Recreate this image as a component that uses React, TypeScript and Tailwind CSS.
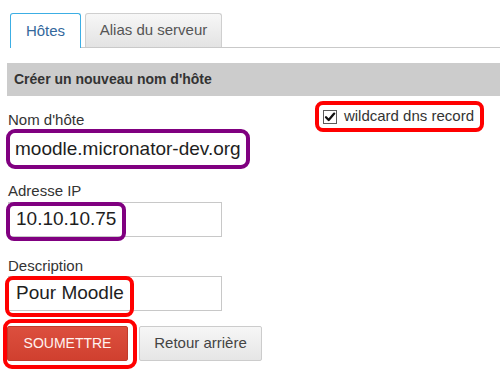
import type { ReactNode } from 'react'

const Label = ({ children, className = '' }: { children: ReactNode; className?: string }) => (
  <div className={`pl-[2px] text-[15px] leading-[16px] text-[#333] ${className}`}>{children}</div>
)

const Field = ({ value }: { value: string }) => (
  <div className="ml-[2px] mt-[3px] flex h-[35px] w-[214px] items-center border border-[#c8c8c8] bg-white pl-[7px] text-[19px] text-[#1e1e1e]">
    {value}
  </div>
)

const CheckIcon = () => (
  <span className="flex h-[14px] w-[14px] items-center justify-center border border-[#5a5a5a] bg-white">
    <svg width="12" height="12" viewBox="0 0 12 12">
      <path d="M2 6.3 L4.7 9 L10.2 2.6" fill="none" stroke="#111" strokeWidth="2.3" strokeLinecap="round" strokeLinejoin="round" />
    </svg>
  </span>
)

export default function App() {
  return (
    <div className="relative h-[376px] w-[500px] overflow-hidden bg-white font-['Liberation_Sans',Arial,sans-serif] text-[#333]">
      {/* tabs */}
      <div className="ml-[10px] flex items-end gap-[4px] border-b border-[#c9c9c9] pt-[13px]">
        <div className="-mb-px flex h-[35px] w-[71px] items-center justify-center rounded-t-[3px] border border-b-0 border-[#3caee4] bg-white text-[15px] text-[#33689c]">
          Hôtes
        </div>
        <div className="flex h-[34px] w-[137px] items-center justify-center rounded-t-[3px] border border-b-0 border-[#cfcfcf] bg-linear-to-b from-[#f7f7f7] to-[#e3e3e3] text-[15px] text-[#555]">
          Alias du serveur
        </div>
      </div>

      <div className="ml-[7px] mt-[15px] flex h-[33px] items-center bg-[#cccccc] pl-[7px] text-[14px] font-bold text-[#333]">
        Créer un nouveau nom d'hôte
      </div>

      <div className="pl-[6px]">
        <div className="flex items-start justify-between pr-[16px]">
          <div className="pt-[16px]">
            <Label>Nom d'hôte</Label>
            <div className="mt-[1px] flex h-[40px] w-[244px] items-center rounded-[9px] border-4 border-[#800080] bg-white pl-[5px] text-[19px] text-[#1e1e1e]">
              moodle.micronator-dev.org
            </div>
          </div>
          <label className="mt-[5px] flex h-[31px] items-center gap-[7px] rounded-[8px] border-4 border-[#ff0000] pl-[4px] pr-[6px] text-[15px] text-[#333]">
            <CheckIcon />
            wildcard dns record
          </label>
        </div>

        <Label className="mt-[14px]">Adresse IP</Label>
        <div className="relative mt-[2px] h-[39px]">
          <Field value="10.10.10.75" />
          <div className="pointer-events-none absolute left-0 top-0 h-[39px] w-[120px] rounded-[8px] border-4 border-[#800080]" />
        </div>

        <Label className="mt-[17px]">Description</Label>
        <div className="relative -mt-px h-[41px]">
          <Field value="Pour Moodle" />
          <div className="pointer-events-none absolute left-[-1px] top-0 h-[41px] w-[129px] rounded-[8px] border-4 border-[#ff0000]" />
        </div>

        <div className="ml-[1px] mt-[9px] flex items-start gap-[11px]">
          <div className="relative">
            <button className="flex h-[35px] w-[121px] items-center justify-center rounded-[2px] border border-[#c13b2b] bg-linear-to-b from-[#dc4f3e] to-[#d0402f] text-[14px] text-[#fff3f0]">
              SOUMETTRE
            </button>
            <div className="pointer-events-none absolute left-[-4px] top-[-7px] h-[50px] w-[134px] rounded-[9px] border-4 border-[#ff0000]" />
          </div>
          <button className="flex h-[35px] w-[123px] items-center justify-center rounded-[2px] border border-[#cccccc] bg-linear-to-b from-[#f6f6f6] to-[#e6e6e6] text-[15px] text-[#444]">
            Retour arrière
          </button>
        </div>
      </div>
    </div>
  )
}
